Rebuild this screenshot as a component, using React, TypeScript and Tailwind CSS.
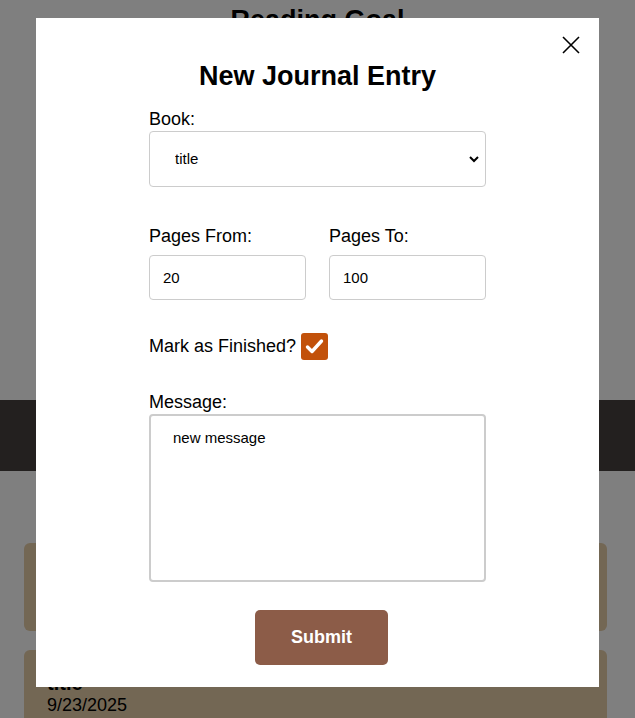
import { useState } from "react"

function BackgroundPage() {
  return (
    <div className="min-h-[718px] bg-white font-['Liberation_Sans',Arial,sans-serif] text-black">
      <h1 className="pt-[5px] text-center text-[27px] font-bold leading-[31px]">Reading Goal</h1>
      <div className="mt-[364px] h-[71px] bg-[#47403f]" />
      <div className="ml-[24px] mr-[28px] mt-[72px] flex flex-col gap-[19px]">
        <div className="h-[88px] rounded-[6px] bg-[#e6cea8]" />
        <div className="h-[90px] rounded-[6px] bg-[#e6cea8] px-[23px] pt-[22px]">
          <p className="text-[20px] font-bold leading-[23px]">title</p>
          <p className="text-[18px] leading-[21px]">9/23/2025</p>
        </div>
      </div>
    </div>
  )
}

function CloseIcon() {
  return (
    <svg width="18" height="18" viewBox="0 0 18 18" fill="none">
      <path d="M1 1L17 17M17 1L1 17" stroke="#000" strokeWidth="1.6" />
    </svg>
  )
}

export default function App() {
  const [finished, setFinished] = useState(true)

  return (
    <div className="relative h-[718px] w-full overflow-hidden">
      <BackgroundPage />

      <div className="absolute inset-0 flex justify-center bg-black/50 pt-[18px]">
        <div className="relative h-[669px] w-[563px] bg-white font-['Liberation_Sans',Arial,sans-serif] text-black">
          <button className="absolute right-[19px] top-[18px] p-0">
            <CloseIcon />
          </button>

          <h2 className="mt-[43px] text-center text-[27px] font-bold leading-[31px]">New Journal Entry</h2>

          <form className="mx-auto mt-[17px] flex w-[337px] flex-col" onSubmit={(e) => e.preventDefault()}>
            <label className="text-[18px] leading-[21px]">Book:</label>
            <div className="relative mt-[1px]">
              <select className="h-[56px] w-full appearance-none rounded-[4px] border border-[#cccccc] bg-white pl-[25px] text-[15px] outline-none">
                <option>title</option>
              </select>
              <svg
                className="pointer-events-none absolute right-[6px] top-[24px]"
                width="12"
                height="8"
                viewBox="0 0 12 8"
                fill="none"
              >
                <path d="M2 2L6 6L10 2" stroke="#000" strokeWidth="2" />
              </svg>
            </div>

            <div className="mt-[39px] flex gap-[23px]">
              <div className="flex flex-1 flex-col">
                <label className="text-[18px] leading-[21px]">Pages From:</label>
                <input
                  defaultValue="20"
                  className="mt-[8px] h-[45px] w-full rounded-[4px] border border-[#cccccc] px-[13px] text-[15px] outline-none"
                />
              </div>
              <div className="flex flex-1 flex-col">
                <label className="text-[18px] leading-[21px]">Pages To:</label>
                <input
                  defaultValue="100"
                  className="mt-[8px] h-[45px] w-full rounded-[4px] border border-[#cccccc] px-[13px] text-[15px] outline-none"
                />
              </div>
            </div>

            <div className="mt-[33px] flex h-[27px] items-center gap-[5px]">
              <span className="text-[18px] leading-[21px]">Mark as Finished?</span>
              <button
                type="button"
                onClick={() => setFinished(!finished)}
                className="flex h-[27px] w-[27px] items-center justify-center rounded-[3px] bg-[#c2510a]"
              >
                {finished && (
                  <svg width="19" height="17" viewBox="0 0 19 17" fill="none">
                    <path d="M2.5 9L7 13.5L16.5 3" stroke="#fff" strokeWidth="3.4" strokeLinecap="round" strokeLinejoin="round" />
                  </svg>
                )}
              </button>
            </div>

            <label className="mt-[32px] text-[18px] leading-[21px]">Message:</label>
            <textarea
              defaultValue="new message"
              className="mt-[1px] h-[168px] w-full resize-none rounded-[4px] border-2 border-[#cccccc] px-[22px] py-[13px] text-[15px] leading-[18px] outline-none"
            />

            <div className="mt-[28px] flex justify-center pl-[8px]">
              <button
                type="submit"
                className="h-[55px] w-[133px] rounded-[5px] bg-[#8c5c48] text-[18px] font-bold text-white"
              >
                Submit
              </button>
            </div>
          </form>
        </div>
      </div>
    </div>
  )
}
